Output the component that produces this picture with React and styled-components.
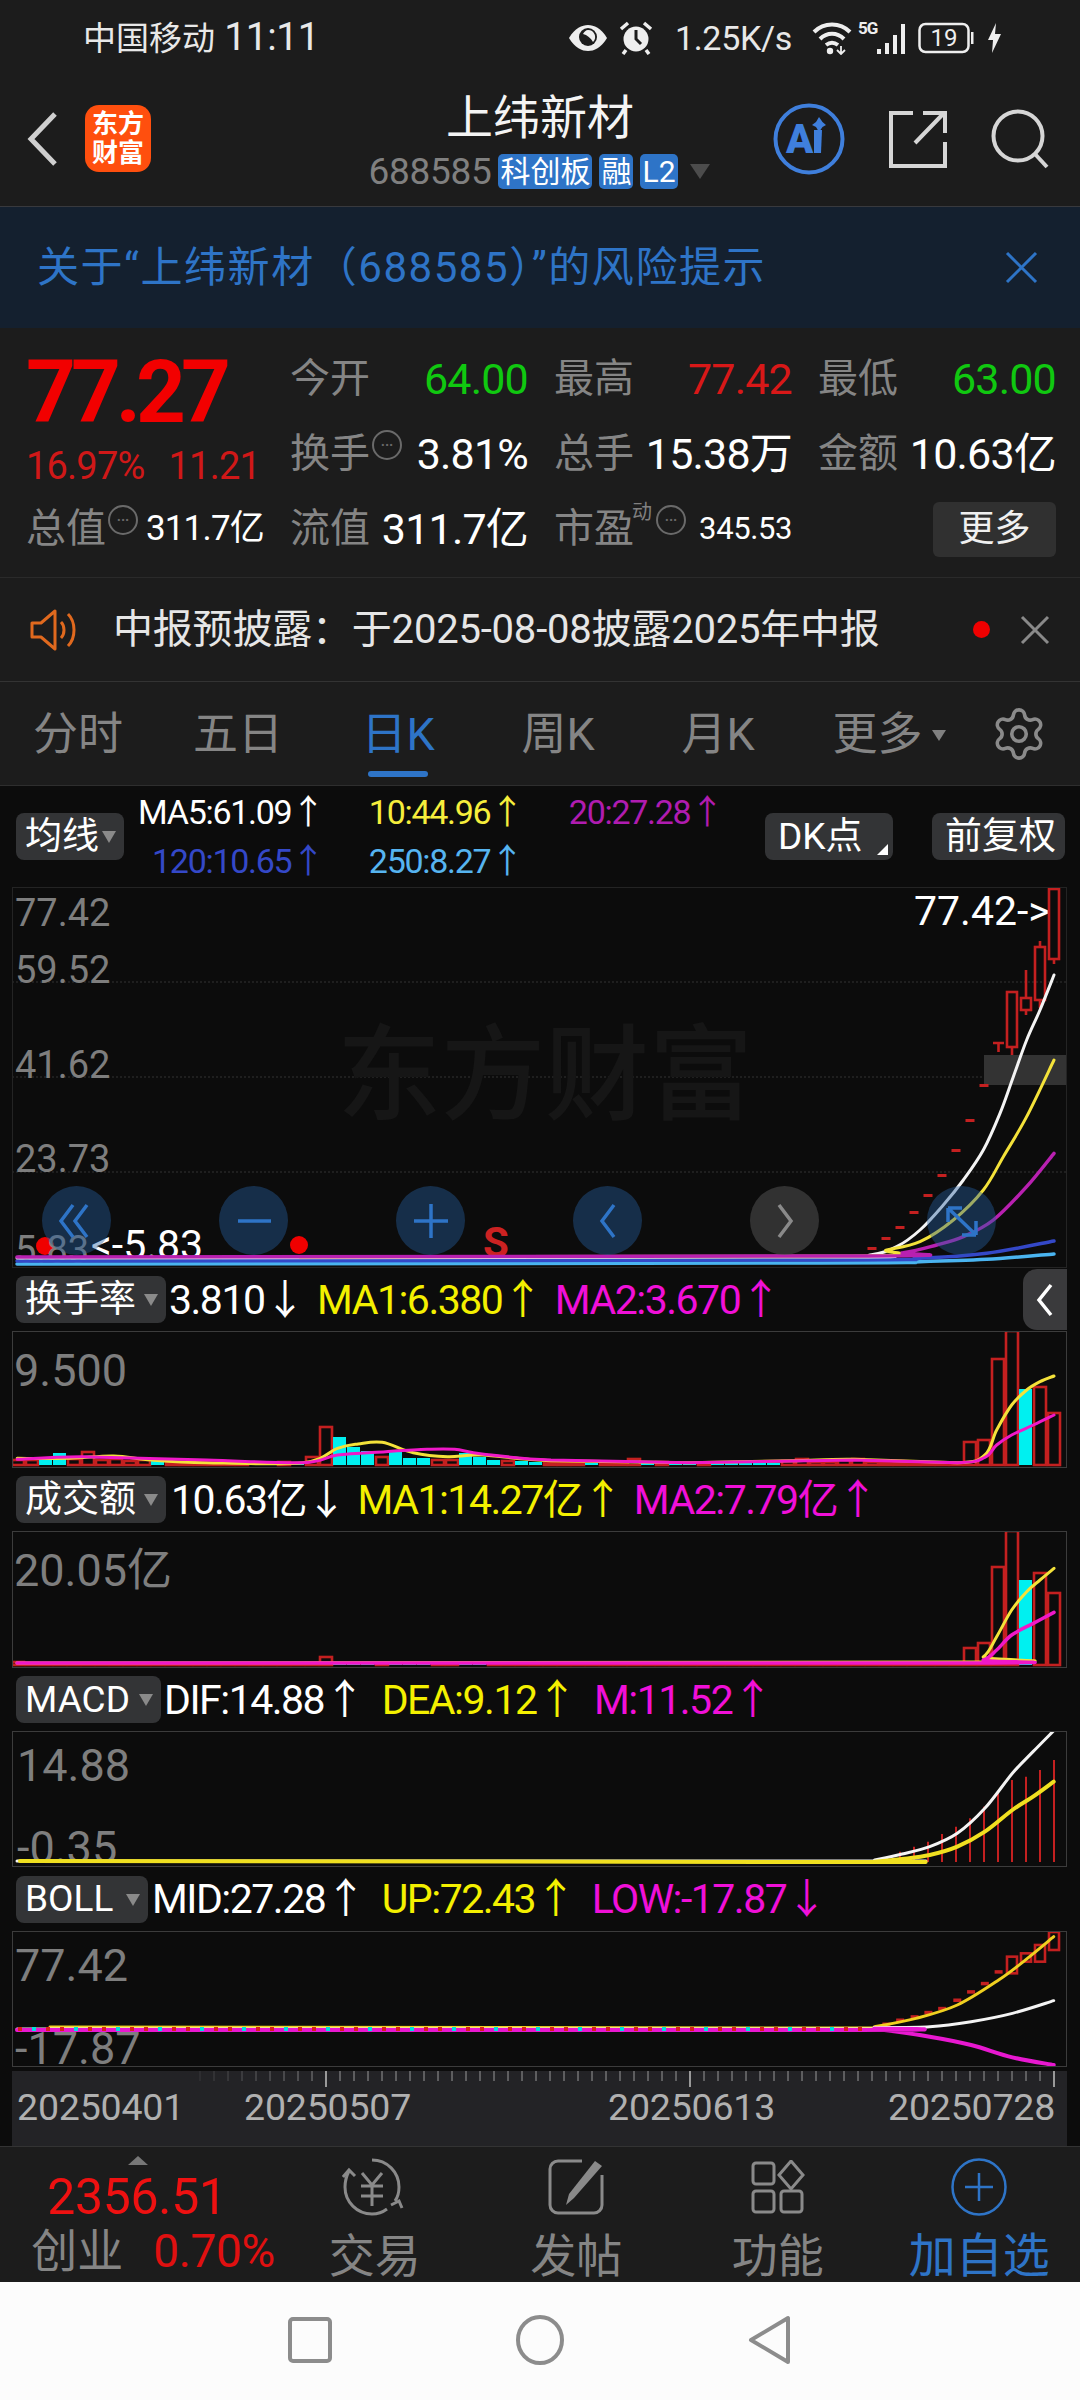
import React from "react";
import styled, { createGlobalStyle } from "styled-components";
import { Settings } from "lucide-react";

const Global = createGlobalStyle`
  html, body { margin: 0; padding: 0; background: #1c1c1c; }
  body { width: 1080px; height: 2400px; overflow: hidden; font-family: Roboto, "Noto Sans CJK SC", sans-serif; color: #fff; }
  * { box-sizing: border-box; }
`;

const BLUE = "#2e74c7";
const RED = "#c42020";
const z4 = (x, y) => [x / 1.452, 1270 + y / 3];
const z5 = (x, y) => [x / 1.452, 1680 + y / 3];
const z7 = (x, y) => [820 + x / 3, 880 + y / 3];
const z8 = (x, y) => [820 + x / 3, 1320 + y / 3];

const smooth = (p) => {
  let d = `M${p[0][0]} ${p[0][1]}`;
  for (let i = 0; i < p.length - 1; i++) {
    const a = p[Math.max(i - 1, 0)], b = p[i], c = p[i + 1], e = p[Math.min(i + 2, p.length - 1)];
    const k = c[0] - b[0] > 100 ? 0 : 1;
    d += `C${b[0] + (k * (c[0] - a[0])) / 6} ${b[1] + (k * (c[1] - a[1])) / 6} ${c[0] - (k * (e[0] - b[0])) / 6} ${c[1] - (k * (e[1] - b[1])) / 6} ${c[0]} ${c[1]}`;
  }
  return d;
};

const Page = styled.div`width: 1080px; height: 2400px; display: flex; flex-direction: column; background: #1c1c1c;`;

const Status = styled.div`height: 75px; display: flex; align-items: center; padding-left: 83px; position: relative; font-size: 33px; color: #e8e8e8;`;
const Carrier = styled.span`width: 240px; white-space: nowrap; font-size: 33px; line-height: 40px;`;
const Clock = styled.span`font-size: 39px; letter-spacing: -0.4px;`;
const StatusRight = styled.div`margin-left: auto; display: flex; align-items: center; padding-right: 78px;`;
const Speed = styled.span`font-size: 34px; line-height: 40px; margin: 0 20px 0 22px; white-space: nowrap; letter-spacing: -0.3px;`;

const Nav = styled.div`height: 132px; border-bottom: 1px solid #38393d; display: grid; grid-template-columns: 1fr auto 1fr; padding-bottom: 4px; align-items: center;`;
const NavLeft = styled.div`display: flex; align-items: center; padding-left: 27px; gap: 26px;`;
const Logo = styled.div`width: 66px; height: 67px; border-radius: 14px; background: #ff4f0e; color: #fff; font-size: 26px; line-height: 29px; font-weight: 700; display: flex; align-items: center; justify-content: center; text-align: center;`;
const NavCenter = styled.div`display: flex; flex-direction: column; align-items: center; gap: 6px;`;
const Title = styled.div`font-size: 47px; line-height: 60px; color: #f4f4f4;`;
const SubRow = styled.div`display: flex; align-items: center; height: 36px; margin-left: -2px;`;
const Code = styled.span`font-size: 37px; line-height: 40px; color: #808080; margin-right: 7px; letter-spacing: -0.3px;`;
const Badge = styled.span`background: ${BLUE}; color: #fff; border-radius: 5px; font-size: 30px; line-height: 35px; height: 35px; padding: 0 2px; margin-right: 7px; white-space: nowrap;`;
const Caret = styled.span`width: 0; height: 0; border-left: 10px solid transparent; border-right: 10px solid transparent; border-top: 15px solid #4c4c4c; margin-left: 5px;`;
const NavRight = styled.div`display: flex; align-items: center; justify-content: flex-end; padding-right: 31px; gap: 44px;`;

const Banner = styled.div`height: 121px; background: #14202f; display: flex; align-items: center; justify-content: space-between; padding: 0 42px 0 37px; color: ${BLUE}; font-size: 42px; line-height: 50px; letter-spacing: 1.55px;`;

const Stats = styled.div`height: 250px; border-bottom: 1px solid #2a2a2a; padding: 13px 24px 0 26px; display: grid; grid-template-columns: repeat(4, 238px); grid-auto-rows: 75px; column-gap: 26px;`;
const PriceCell = styled.div`grid-row: span 2; display: flex; flex-direction: column;`;
const BigPrice = styled.div`font-size: 87px; line-height: 74px; margin-top: 14px; font-weight: 700; color: #f20000; letter-spacing: -5px;`;
const PriceSub = styled.div`margin-top: 22px; height: 30px; line-height: 30px; font-size: 38px; letter-spacing: -0.8px; color: #d01818; display: flex; justify-content: space-between; width: 234px;`;
const Cell = styled.div`display: flex; align-items: center; justify-content: space-between; white-space: nowrap; padding-top: 1px;`;
const CellLabel = styled.span`font-size: 40px; line-height: 50px; color: #858585; display: flex; align-items: center;`;
const CellValue = styled.span`font-size: ${(p) => p.$size || 43}px; line-height: 50px; color: ${(p) => p.$color || "#fff"}; letter-spacing: ${(p) => p.$ls ?? -0.8}px;`;
const Info = styled.span`display: inline-flex; flex: none; width: 30px; height: 30px; border: 2px solid #6a6a6a; border-radius: 50%; margin: -18px 0 0 2px; align-items: center; justify-content: center; color: #6a6a6a; font-size: 14px; line-height: 1; font-weight: 700;`;
const Sup = styled.span`font-size: 20px; line-height: 24px; color: #808080; width: 22px; margin: -34px 0 0 -2px;`;
const MoreBtn = styled.span`margin: 0 0 0 auto; width: 123px; height: 55px; border-radius: 6px; background: #303030; color: #f0f0f0; font-size: 36px; line-height: 50px; display: flex; align-items: center; justify-content: center;`;

const Notice = styled.div`height: 104px; border-bottom: 1px solid #333; display: flex; align-items: center; padding-left: 30px; position: relative;`;
const NoticeText = styled.span`font-size: 40px; line-height: 50px; color: #e6e6e6; margin-left: 33px; white-space: nowrap; letter-spacing: -0.2px;`;
const NoticeDot = styled.span`width: 17px; height: 17px; border-radius: 50%; background: #f00000; margin-left: auto;`;
const NoticeClose = styled.span`margin: 0 30px 0 30px; display: flex;`;

const Tabs = styled.div`height: 104px; border-bottom: 1px solid #2e2e2e; display: grid; grid-template-columns: repeat(6, 160px) auto; align-items: center; margin-left: -2px;`;
const Tab = styled.div`text-align: center; font-size: 45px; line-height: 56px; color: ${(p) => (p.$on ? BLUE : "#858585")}; position: relative; height: 100%; display: flex; align-items: center; justify-content: center; padding: 3px 0 0 ${(p) => p.$pad || 0}px; white-space: nowrap;
  &::after { content: ""; display: ${(p) => (p.$on ? "block" : "none")}; position: absolute; left: 50px; width: 60px; height: 6px; bottom: 8px; background: ${BLUE}; border-radius: 3px; }
`;
const TabCaret = styled.span`display: inline-block; flex: none; width: 0; height: 0; border-left: 7px solid transparent; border-right: 7px solid transparent; border-top: 11px solid #808080; margin-left: 9px;`;
const Gear = styled.div`padding-left: 32px; display: flex; color: #8a8a8a;`;

const ChartArea = styled.div`height: 1360px; background: #0c0c0c; padding: 0 13px 0 12px; display: flex; flex-direction: column; position: relative;`;
const MainHeader = styled.div`height: 101px; display: flex; align-items: center; padding-left: 4px;`;
const Chip = styled.span`height: 47px; width: ${(p) => p.$w}px; flex: none; background: #333436; border-radius: 8px; color: #fff; font-size: ${(p) => p.$size || 37}px; line-height: 1; display: flex; align-items: center; padding: 0 0 1px ${(p) => p.$pad ?? 9}px; white-space: nowrap; position: relative;`;
const ChipCaret = styled.span`position: absolute; right: 8px; top: 18px; width: 0; height: 0; border-left: 7px solid transparent; border-right: 7px solid transparent; border-top: 12px solid #8a8a8a;`;
const Legend = styled.div`display: grid; grid-template-columns: 200px 199px 200px; grid-auto-rows: 49px; margin-left: 0; width: 600px;`;
const LegendItem = styled.span`text-align: right; font-size: 34px; line-height: 49px; letter-spacing: -1.3px; white-space: nowrap; color: ${(p) => p.$color};`;
const Corner = styled.span`position: absolute; right: 5px; bottom: 5px; width: 0; height: 0; border-left: 11px solid transparent; border-bottom: 11px solid #fff;`;
const HeaderActions = styled.div`margin-left: auto; display: flex; gap: 39px; padding-right: 2px;`;

const Frame = styled.div`height: ${(p) => p.$h}px; border: 1px solid ${(p) => p.$line || "#3c3c3c"}; flex: none; position: relative;`;
const Plot = styled.svg`display: block; width: 100%; height: 100%;`;
const AxisText = styled.text`font-size: ${(p) => p.$size || 45}px; fill: ${(p) => p.$fill || "#7e7e7e"}; dominant-baseline: central;`;
const Watermark = styled.text`font-size: 104px; font-weight: 500; fill: #161616; dominant-baseline: central;`;
const SignalMark = styled.text`font-size: 42px; font-weight: 700; fill: #cc2222; dominant-baseline: central; text-anchor: middle;`;

const Controls = styled.div`position: absolute; left: 29px; top: 298px; display: flex; gap: 108px;`;
const Round = styled.span`width: 69px; height: 69px; border-radius: 50%; background: ${(p) => (p.$gray ? "rgba(80,80,80,.55)" : "rgba(38,95,160,.42)")}; display: flex; align-items: center; justify-content: center;`;

const IndRow = styled.div`height: ${(p) => p.$h || 63}px; flex: none; display: flex; align-items: center; padding-left: 4px; position: relative;`;
const Values = styled.div`display: flex; align-items: center; margin-left: ${(p) => p.$ml ?? 3}px; gap: ${(p) => p.$gap ?? 18}px;`;
const Val = styled.span`font-size: 41px; line-height: 48px; color: ${(p) => p.$color}; white-space: nowrap; letter-spacing: -1.5px;`;
const Collapse = styled.div`position: absolute; right: 0; top: 1px; width: 44px; height: 61px; background: #3a3a3c; border-radius: 14px 0 0 14px; display: flex; align-items: center; justify-content: center;`;

const Axis = styled.div`margin-top: 4px; height: 75px; background: #232326; position: relative; flex: none;`;
const AxisLabels = styled.div`position: absolute; left: 0; right: 0; top: 19px; height: 34px; display: grid; grid-template-columns: 227px 364px 280px auto; padding-left: 5px; font-size: 37.5px; color: #b0b0b0; line-height: 34px; letter-spacing: -0.2px;`;

const Bottom = styled.div`height: 136px; background: #1c1c1c; border-top: 1px solid #333; display: grid; grid-template-columns: 274px repeat(4, 1fr);`;
const IndexBlock = styled.div`display: flex; flex-direction: column; align-items: center; padding-top: 9px;`;
const IndexCaret = styled.span`width: 0; height: 0; border-left: 10px solid transparent; border-right: 10px solid transparent; border-bottom: 9px solid #777; margin-left: 2px;`;
const IndexVal = styled.div`font-size: 50px; line-height: 60px; color: #ee1111; margin-top: 2px; letter-spacing: -0.3px;`;
const IndexRow = styled.div`display: flex; align-items: center; gap: 30px; line-height: 48px; height: 48px; margin-left: 32px; white-space: nowrap;`;
const IndexName = styled.span`font-size: 46px; color: #858585;`;
const IndexPct = styled.span`font-size: 46px; color: #e01010; letter-spacing: -0.4px;`;
const Action = styled.div`display: flex; flex-direction: column; align-items: center; padding-top: 10px; color: ${(p) => (p.$on ? BLUE : "#858585")};`;
const ActionIcon = styled.div`height: 60px; display: flex; align-items: center; justify-content: center;`;
const ActionText = styled.span`font-size: ${(p) => p.$size || 46}px; line-height: 58px; margin-top: 10px; white-space: nowrap;`;

const SysNav = styled.div`height: 118px; background: #fcfcfc; display: flex; align-items: center; justify-content: center; gap: 184px; padding-right: 3px; padding-bottom: 2px;`;

const Icon = ({ w, h, children, color = "none", ...r }) => (
  <svg width={w} height={h} viewBox={`0 0 ${w} ${h}`} fill={color} {...r}>{children}</svg>
);

const EyeIcon = () => (
  <Icon w={40} h={30} style={{ marginRight: 11 }}>
    <path d="M1 15C7 5 14 2 20 2s13 3 19 13c-6 10-13 13-19 13S7 25 1 15Z" fill="#eee" />
    <circle cx="20" cy="14" r="9" fill="#1c1c1c" />
    <path d="M20 7a7 7 0 0 1 5 12c-2-4-6-7-10-8 1-2 3-4 5-4Z" fill="#eee" />
  </Icon>
);
const AlarmIcon = () => (
  <Icon w={34} h={34}>
    <circle cx="17" cy="18" r="12.5" fill="#eee" />
    <path d="M17 9v9l5 5" stroke="#1c1c1c" strokeWidth="3" />
    <path d="M2 8l7-6M32 8l-7-6M7 29l-3 4M27 29l3 4" stroke="#eee" strokeWidth="3.5" />
  </Icon>
);
const WifiIcon = () => (
  <Icon w={40} h={34}>
    <path d="M2 11C12 1 28 1 38 11M8 18c7-7 17-7 24 0M14 24c4-3 8-3 12 0" stroke="#eee" strokeWidth="4" />
    <circle cx="18" cy="30" r="3.2" fill="#eee" />
    <path d="M29 25v8M25 29l4 4 4-4" stroke="#eee" strokeWidth="1.8" />
  </Icon>
);
const SignalIcon = () => (
  <Icon w={52} h={34} style={{ marginLeft: 6 }}>
    <text x="0" y="13" fontSize="17" fontWeight="700" fill="#eee" letterSpacing="-1">5G</text>
    <rect x="19" y="28" width="4" height="5" fill="#eee" />
    <rect x="27" y="22" width="4" height="11" fill="#eee" />
    <rect x="35" y="14" width="4" height="19" fill="#eee" />
    <rect x="43" y="3" width="4" height="30" fill="#eee" />
  </Icon>
);
const BatteryIcon = () => (
  <Icon w={58} h={34} style={{ marginLeft: 8 }}>
    <rect x="1.5" y="3" width="49" height="28" rx="6" stroke="#eee" strokeWidth="2.5" />
    <rect x="53" y="11" width="2.5" height="12" fill="#eee" />
    <text x="26" y="25" textAnchor="middle" fontSize="24" fill="#eee">19</text>
  </Icon>
);
const BoltIcon = () => (
  <Icon w={15} h={30} style={{ marginLeft: 11 }}>
    <path d="M9 0 1 17h5l-1 13 9-19H8Z" fill="#eee" />
  </Icon>
);

const BackIcon = () => (
  <Icon w={32} h={54}><path d="M28 2 4 27l24 25" stroke="#cfcfcf" strokeWidth="5" /></Icon>
);
const AiIcon = () => (
  <Icon w={72} h={72}>
    <circle cx="36" cy="36" r="33.5" stroke="#3f7fdc" strokeWidth="4" />
    <text x="13" y="50" fontSize="40" fontWeight="900" fontFamily="Roboto" fill="#3f7fdc">A</text>
    <path d="M41 27h8l-1 23h-7Z" fill="#3f7fdc" />
    <path d="M46 14l3.5 5 3.5 3-3.5 2-3.5 5-3-5-4-2 4-3Z" fill="#3f7fdc" />
  </Icon>
);
const ShareIcon = () => (
  <Icon w={58} h={58}>
    <path d="M24 3H2v53h54V32" stroke="#d6d6d6" strokeWidth="4" />
    <path d="M26 33 55 3M34 3h22v20" stroke="#d6d6d6" strokeWidth="4" />
  </Icon>
);
const SearchIcon = () => (
  <Icon w={58} h={60}>
    <circle cx="27" cy="27" r="24.5" stroke="#d6d6d6" strokeWidth="4" />
    <path d="M44 45 56 58" stroke="#d6d6d6" strokeWidth="4" />
  </Icon>
);
const XIcon = ({ s = 33, c = BLUE, w = 3 }) => (
  <Icon w={s} h={s}><path d={`M2 2 ${s - 2} ${s - 2}M${s - 2} 2 2 ${s - 2}`} stroke={c} strokeWidth={w} /></Icon>
);
const SpeakerIcon = () => (
  <Icon w={50} h={44}>
    <path d="M2 15h9L25 3v38L11 29H2Z" stroke="#e0691e" strokeWidth="3" strokeLinejoin="round" />
    <path d="M31 14c4 4 4 12 0 16M38 6c8 8 8 24 0 32" stroke="#e0691e" strokeWidth="3" />
  </Icon>
);

const TURN = "r5 r5 c5 c12 r6 r13 r5 r6 r4 r5 c4 r2 r2 r2 r2 r2 r2 c2 c2 r3 c2 r8 r38 c28 c18 c14 r8 c14 c7 c7 r5 r5 c12 c8 c5 r4 c4 c3 r2 r2 r2 c2 r2 r2 r6 c4 r3 c3 c3 r2 c2 c2 c2 c2 c2 r4 r6 r3 r3 r5 r6 r3 r2 r2 r2 r2 r2 r2 r23 r25 r106 r134 c76 r78 r52".split(" ");
const AMT = "r3 r2 r1 r1 r1 r1 r1 r1 r1 r1 r1 r1 r1 r1 r1 r1 r1 r1 r1 r1 r1 r2 r8 c2 c3 c3 r2 c3 c2 c2 r2 r2 c2 c2 r1 r1 r1 r1 r1 r1 r1 r1 r1 r1 r1 r1 r1 r1 r1 r1 r1 r1 r1 r1 r1 r1 r1 r1 r1 r1 r1 r1 r1 r1 r1 r1 r1 r1 r17 r22 r98 r134 c85 r92 r72".split(" ");

const Bars = ({ data, base }) => (
  <>
    {data.map((d, i) => {
      const h = +d.slice(1);
      const cx = 1054 - 14 * (74 - i);
      return d[0] === "c" ? (
        <rect key={i} x={cx - 7} y={base - h} width={13} height={h} fill="#00f0f0" />
      ) : (
        <rect key={i} x={cx - 6} y={base - h} width={12} height={h} fill="none" stroke={RED} strokeWidth={2.6} />
      );
    })}
  </>
);

const Line = ({ pts, c, w = 3, o }) => <path d={smooth(pts)} fill="none" stroke={c} strokeWidth={w} opacity={o} strokeLinecap="round" />;

const Candle = ({ x, top, bottom, hi, lo }) => (
  <g stroke={RED} strokeWidth="2.6" fill="none">
    <rect x={x} y={top} width={10} height={bottom - top} />
    {hi && <path d={`M${x + 5} ${hi}V${top}`} />}
    {lo && <path d={`M${x + 5} ${bottom}V${lo}`} />}
  </g>
);

const DASHES = [[984, 1085], [970, 1120], [956, 1150], [942, 1175], [928, 1195], [914, 1212], [900, 1227], [886, 1238], [872, 1248]];

const MainPlot = () => (
  <Plot viewBox="13 888 1053 379" preserveAspectRatio="none">
    {[982, 1077, 1172].map((y) => (
      <line key={y} x1="12" x2="1067" y1={y} y2={y} stroke="#333" strokeWidth="1" strokeDasharray="2 2" />
    ))}
    <Watermark x="337" y="1076">东方财富</Watermark>
    <rect x="984" y="1055" width="83" height="30" fill="#333" />
    <circle cx="45" cy="1246" r="9" fill="#f00000" />
    <circle cx="299" cy="1245" r="9" fill="#f00000" />
    <AxisText $size={38} x="15" y="913">77.42</AxisText>
    <AxisText $size={38} x="15" y="970">59.52</AxisText>
    <AxisText $size={38} x="15" y="1065">41.62</AxisText>
    <AxisText $size={38} x="15" y="1159">23.73</AxisText>
    <AxisText $size={38} x="15" y="1250">5.83</AxisText>
    <AxisText $size={41} $fill="#fff" x="914" y="911">77.42-&gt;</AxisText>
    <AxisText $size={41} $fill="#fff" x="91" y="1245">&lt;-5.83</AxisText>
    <SignalMark x="496" y="1242">S</SignalMark>
    {DASHES.map(([x, y]) => <rect key={x} x={x - 4.5} y={y - 1} width="9" height="3" fill={RED} />)}
    <g stroke={RED} strokeWidth="2.6" fill="none"><path d="M993 1043h11M998.5 1043v9" /></g>
    <Candle x={1007} top={992} bottom={1047} lo={1055} />
    <Candle x={1021} top={998} bottom={1010} hi={970} lo={1015} />
    <Candle x={1035} top={947} bottom={1000} hi={941} lo={1008} />
    <Candle x={1049} top={889} bottom={959} lo={964} />
    <Line c="#4ab4f0" w={3.5} pts={[[17, 1264], [820, 1263], ...[[300, 1145], [500, 1138], [702, 1122]].map(([x, y]) => z7(x, y))]} />
    <Line c="#3448c8" w={3.5} pts={[[17, 1261], [820, 1260], ...[[300, 1135], [500, 1120], [702, 1083]].map(([x, y]) => z7(x, y))]} />
    <Line c="#f4f4f4" w={3} pts={[[17, 1258], [820, 1257], ...[[150, 1125], [230, 1100], [300, 1050], [370, 975], [430, 900], [490, 810], [540, 700], [580, 590], [620, 480], [660, 390], [702, 285]].map(([x, y]) => z7(x, y))]} />
    <Line c="#f4e23a" w={3} pts={[[300, 1257], [853, 1256], ...[[200, 1110], [300, 1085], [400, 1020], [490, 930], [550, 830], [620, 710], [702, 540]].map(([x, y]) => z7(x, y))]} />
    <Line c="#b820b0" w={3.5} pts={[[17, 1257], [853, 1256], ...[[250, 1118], [350, 1095], [430, 1070], [520, 1020], [620, 920], [702, 820]].map(([x, y]) => z7(x, y))]} />
  </Plot>
);

const TurnPlot = () => (
  <Plot viewBox="13 1332 1053 135" preserveAspectRatio="none">
    <AxisText x="14" y="1370">9.500</AxisText>
    <Bars data={TURN} base={1465} />
    <Line c="#f4e23a" pts={[[25, 565], [100, 565], [165, 558], [220, 570], [300, 578], [440, 578], [490, 535], [520, 522], [555, 517], [600, 548], [650, 560], [700, 555], [800, 572], [1000, 578], [1150, 572], [1240, 568], [1390, 578], [1430, 555]].map(([x, y]) => z4(x, y)).concat([[530, 330], [575, 255], [620, 210], [660, 185], [702, 168]].map(([x, y]) => z8(x, y)))} />
    <Line c="#f018c8" pts={[[25, 568], [120, 560], [300, 570], [440, 578], [490, 555], [560, 545], [620, 538], [660, 538], [700, 552], [800, 570], [1000, 578], [1240, 570], [1390, 578], [1430, 562]].map(([x, y]) => z4(x, y)).concat([[530, 375], [575, 345], [640, 315], [702, 285]].map(([x, y]) => z8(x, y)))} />
  </Plot>
);

const AmountPlot = () => (
  <Plot viewBox="13 1532 1053 135" preserveAspectRatio="none">
    <AxisText x="14" y="1570">20.05亿</AxisText>
    <Bars data={AMT} base={1665} />
    <Line c="#f4e23a" pts={[[17, 1663], [958, 1662], ...[[490, 1010], [530, 950], [575, 870], [620, 815], [660, 780], [702, 745]].map(([x, y]) => z8(x, y))]} />
    <Line c="#f018c8" w={3.5} pts={[[17, 1663], [958, 1663], ...[[490, 1020], [530, 990], [575, 945], [640, 910], [702, 877]].map(([x, y]) => z8(x, y))]} />
  </Plot>
);

const MACD_TOPS = [515, 500, 485, 462, 440, 415, 380, 340, 300, 290, 270, 240];
const MacdPlot = () => (
  <Plot viewBox="13 1732 1053 134" preserveAspectRatio="none">
    <AxisText x="17" y="1765">14.88</AxisText>
    <AxisText x="17" y="1847">-0.35</AxisText>
    {MACD_TOPS.map((t, i) => {
      const x = 1054 - 14 * (11 - i);
      return <line key={i} x1={x} x2={x} y1={1680 + t / 3} y2={1862} stroke="#c42020" strokeWidth="2" />;
    })}
    <Line c="#f4f4f4" pts={[[17, 1861], [860, 1861], ...[[1270, 540], [1310, 522], [1350, 500], [1390, 460], [1430, 385], [1470, 280], [1500, 215], [1530, 152]].map(([x, y]) => z5(x, y))]} />
    <Line c="#f0e020" w={4} pts={[[20, 1861], [860, 1862], ...[[1270, 545], [1310, 537], [1350, 525], [1390, 500], [1430, 455], [1470, 390], [1500, 350], [1530, 305]].map(([x, y]) => z5(x, y))]} />
  </Plot>
);

const BOLL_DASH = [[1430, 910], [1410, 935], [1390, 960], [1368, 985], [1348, 997], [1328, 1010], [1307, 1020], [1287, 1032], [1450, 875]];
const BollPlot = () => (
  <Plot viewBox="13 1932 1053 134" preserveAspectRatio="none">
    <AxisText x="15" y="1965">77.42</AxisText>
    <AxisText x="15" y="2048">-17.87</AxisText>
    {BOLL_DASH.map(([x, y]) => {
      const [a, b] = z5(x, y);
      return <rect key={x} x={a - 4} y={b - 1.5} width="8" height="3.5" fill={RED} />;
    })}
    <Candle x={1007} top={1680 + 830 / 3} bottom={1680 + 880 / 3} />
    <Candle x={1021} top={1680 + 820 / 3} bottom={1680 + 845 / 3} />
    <Candle x={1035} top={1680 + 795 / 3} bottom={1680 + 845 / 3} />
    <Candle x={1049} top={1932} bottom={1680 + 810 / 3} />
    <Line c="#f0d020" pts={[[50, 2027], [860, 2028], ...[[1270, 1040], [1330, 1015], [1390, 975], [1450, 900], [1490, 838], [1530, 770]].map(([x, y]) => z5(x, y))]} />
    <Line c="#f4f4f4" pts={[[17, 2029], [860, 2029], ...[[1270, 1043], [1350, 1040], [1410, 1025], [1470, 1000], [1530, 962]].map(([x, y]) => z5(x, y))]} />
    <Line c="#e818d0" w={4} pts={[[17, 2030], [860, 2030], ...[[1270, 1047], [1350, 1070], [1410, 1095], [1470, 1132], [1530, 1155]].map(([x, y]) => z5(x, y))]} />
    {Array.from({ length: 61 }, (_, i) => (
      <rect key={i} x={18 + i * 14} y="2027" width="4" height="4" fill={i % 3 === 1 ? "#00e0e0" : "#d82020"} />
    ))}
  </Plot>
);

const Stroke = ({ d, c = BLUE, w = 3.5 }) => (
  <Icon w={44} h={44}><path d={d} stroke={c} strokeWidth={w} /></Icon>
);

const TICKS = Array.from({ length: 62 }, (_, i) => 1054 - 14 * i - 12);

const App = () => (
  <Page>
    <Global />
    <Status>
      <Carrier>中国移动<Clock> 11:11</Clock></Carrier>
      <StatusRight>
        <EyeIcon /><AlarmIcon /><Speed>1.25K/s</Speed><WifiIcon /><SignalIcon /><BatteryIcon /><BoltIcon />
      </StatusRight>
    </Status>
    <Nav>
      <NavLeft><BackIcon /><Logo>东方<br />财富</Logo></NavLeft>
      <NavCenter>
        <Title>上纬新材</Title>
        <SubRow>
          <Code>688585</Code><Badge>科创板</Badge><Badge>融</Badge><Badge>L2</Badge><Caret />
        </SubRow>
      </NavCenter>
      <NavRight><AiIcon /><ShareIcon /><SearchIcon /></NavRight>
    </Nav>
    <Banner>
      <span>关于“上纬新材（688585）”的风险提示</span>
      <XIcon />
    </Banner>
    <Stats>
      <PriceCell>
        <BigPrice>77.27</BigPrice>
        <PriceSub><span>16.97%</span><span>11.21</span></PriceSub>
      </PriceCell>
      <Cell><CellLabel>今开</CellLabel><CellValue $color="#10c810">64.00</CellValue></Cell>
      <Cell><CellLabel>最高</CellLabel><CellValue $color="#d81818">77.42</CellValue></Cell>
      <Cell><CellLabel>最低</CellLabel><CellValue $color="#10c810">63.00</CellValue></Cell>
      <Cell><CellLabel>换手<Info>···</Info></CellLabel><CellValue>3.81%</CellValue></Cell>
      <Cell><CellLabel>总手</CellLabel><CellValue>15.38万</CellValue></Cell>
      <Cell><CellLabel>金额</CellLabel><CellValue>10.63亿</CellValue></Cell>
      <Cell><CellLabel>总值<Info>···</Info></CellLabel><CellValue $size={35}>311.7亿</CellValue></Cell>
      <Cell><CellLabel>流值</CellLabel><CellValue>311.7亿</CellValue></Cell>
      <Cell><CellLabel>市盈<Sup>动</Sup><Info>···</Info></CellLabel><CellValue $size={31} $ls={-0.4}>345.53</CellValue></Cell>
      <Cell><MoreBtn>更多</MoreBtn></Cell>
    </Stats>
    <Notice>
      <SpeakerIcon />
      <NoticeText>中报预披露：于2025-08-08披露2025年中报</NoticeText>
      <NoticeDot />
      <NoticeClose><XIcon s={30} c="#8a8a8a" /></NoticeClose>
    </Notice>
    <Tabs>
      <Tab>分时</Tab><Tab>五日</Tab><Tab $on>日K</Tab><Tab>周K</Tab><Tab>月K</Tab>
      <Tab $pad={22}>更多<TabCaret /></Tab>
      <Gear><Settings size={58} strokeWidth={1.5} /></Gear>
    </Tabs>
    <ChartArea>
      <MainHeader>
        <Chip $w={108}>均线<ChipCaret /></Chip>
        <Legend>
          <LegendItem $color="#fff">MA5:61.09↑</LegendItem>
          <LegendItem $color="#f6ee3c">10:44.96↑</LegendItem>
          <LegendItem $color="#b01cb0">20:27.28↑</LegendItem>
          <LegendItem $color="#3448c8">120:10.65↑</LegendItem>
          <LegendItem $color="#56b4f0">250:8.27↑</LegendItem>
        </Legend>
        <HeaderActions>
          <Chip $w={128} $pad={13}>DK点<Corner /></Chip>
          <Chip $w={133} $pad={13}>前复权</Chip>
        </HeaderActions>
      </MainHeader>
      <Frame $h={381} $line="#242424">
        <MainPlot />
        <Controls>
          <Round><Stroke d="M18 6 6 22l12 16M32 6 20 22l12 16" /></Round>
          <Round><Stroke d="M6 22h33" /></Round>
          <Round><Stroke d="M5 22h34M22 5v34" /></Round>
          <Round><Stroke d="M28 6 16 22l12 16" /></Round>
          <Round $gray><Stroke c="#8a8a8a" d="M16 6l12 16-12 16" /></Round>
          <Round><Stroke d="M8 9h14M8 9v14M8 9l28 27M36 22v14M22 36h14" /></Round>
        </Controls>
      </Frame>
      <IndRow>
        <Chip $w={150}>换手率<ChipCaret /></Chip>
        <Values $gap={13}>
          <Val $color="#fff">3.810↓</Val><Val $color="#f4f000">MA1:6.380↑</Val><Val $color="#f010d8">MA2:3.670↑</Val>
        </Values>
        <Collapse><Icon w={20} h={34}><path d="M16 2 4 17l12 15" stroke="#fff" strokeWidth="3.5" /></Icon></Collapse>
      </IndRow>
      <Frame $h={137}><TurnPlot /></Frame>
      <IndRow>
        <Chip $w={150}>成交额<ChipCaret /></Chip>
        <Values $ml={5} $gap={12}>
          <Val $color="#fff">10.63亿↓</Val><Val $color="#f4f000">MA1:14.27亿↑</Val><Val $color="#f010d8">MA2:7.79亿↑</Val>
        </Values>
      </IndRow>
      <Frame $h={137}><AmountPlot /></Frame>
      <IndRow>
        <Chip $w={145}>MACD<ChipCaret /></Chip>
        <Values $gap={18}>
          <Val $color="#fff">DIF:14.88↑</Val><Val $color="#f4f000">DEA:9.12↑</Val><Val $color="#f010d8">M:11.52↑</Val>
        </Values>
      </IndRow>
      <Frame $h={136}><MacdPlot /></Frame>
      <IndRow $h={64}>
        <Chip $w={132}>BOLL<ChipCaret /></Chip>
        <Values $ml={4} $gap={17}>
          <Val $color="#fff">MID:27.28↑</Val><Val $color="#f4f000">UP:72.43↑</Val><Val $color="#f010d8">LOW:-17.87↓</Val>
        </Values>
      </IndRow>
      <Frame $h={136}><BollPlot /></Frame>
      <Axis>
        <Plot as="svg" viewBox="0 0 1055 75" style={{ position: "absolute", inset: 0 }}>
          {TICKS.map((x, i) => {
            const major = [0, 26, 52].includes(i);
            return <line key={i} x1={x} x2={x} y1="0" y2={major ? 16 : 10} stroke="#999" strokeWidth={major ? 2 : 1} opacity={i > 52 ? 0.9 - (i - 52) * 0.08 : 1} />;
          })}
        </Plot>
        <AxisLabels>
          <span>20250401</span><span>20250507</span><span>20250613</span><span>20250728</span>
        </AxisLabels>
      </Axis>
    </ChartArea>
    <Bottom>
      <IndexBlock>
        <IndexCaret />
        <IndexVal>2356.51</IndexVal>
        <IndexRow><IndexName>创业</IndexName><IndexPct>0.70%</IndexPct></IndexRow>
      </IndexBlock>
      <Action>
        <ActionIcon>
          <Icon w={66} h={60}>
            <path d="M7 14C4 20 3 25 3 30c0 15 12 27 27 27 6 0 11-2 15-5M30 3c15 0 27 12 27 27 0 5-1 10-4 14" stroke="#8a8a8a" strokeWidth="3" />
            <path d="M1 20l6-7 6 6M49 48l8-4 3 7" stroke="#8a8a8a" strokeWidth="3" />
            <path d="M20 16l10 12 10-12M30 28v21M19 29h22M19 39h22" stroke="#8a8a8a" strokeWidth="3" />
          </Icon>
        </ActionIcon>
        <ActionText>交易</ActionText>
      </Action>
      <Action>
        <ActionIcon>
          <Icon w={56} h={56}>
            <path d="M34 2H10a8 8 0 0 0-8 8v36a8 8 0 0 0 8 8h36a8 8 0 0 0 8-8V16" stroke="#8a8a8a" strokeWidth="3" />
            <path d="M47 2l7 5-28 32-8 7 3-11Z" fill="#8a8a8a" />
          </Icon>
        </ActionIcon>
        <ActionText>发帖</ActionText>
      </Action>
      <Action>
        <ActionIcon>
          <Icon w={54} h={54}>
            <rect x="2" y="3" width="21" height="21" rx="3" stroke="#8a8a8a" strokeWidth="3" />
            <path d="M40 1l12 14-12 14-12-14Z" stroke="#8a8a8a" strokeWidth="3" />
            <rect x="2" y="31" width="21" height="21" rx="3" stroke="#8a8a8a" strokeWidth="3" />
            <rect x="30" y="31" width="21" height="21" rx="3" stroke="#8a8a8a" strokeWidth="3" />
          </Icon>
        </ActionIcon>
        <ActionText>功能</ActionText>
      </Action>
      <Action $on>
        <ActionIcon>
          <Icon w={56} h={58}>
            <ellipse cx="28" cy="29" rx="26.5" ry="27.5" stroke={BLUE} strokeWidth="2.5" />
            <path d="M14 29h28M28 15v28" stroke={BLUE} strokeWidth="2.5" />
          </Icon>
        </ActionIcon>
        <ActionText $size={47}>加自选</ActionText>
      </Action>
    </Bottom>
    <SysNav>
      <Icon w={44} h={46}><rect x="2" y="2" width="40" height="42" rx="3" stroke="#8c8c8c" strokeWidth="4" /></Icon>
      <Icon w={48} h={50}><ellipse cx="24" cy="25" rx="22" ry="23" stroke="#8c8c8c" strokeWidth="4" /></Icon>
      <Icon w={42} h={50}><path d="M40 3v44L3 25Z" stroke="#8c8c8c" strokeWidth="4" strokeLinejoin="round" /></Icon>
    </SysNav>
  </Page>
);

export default App;
